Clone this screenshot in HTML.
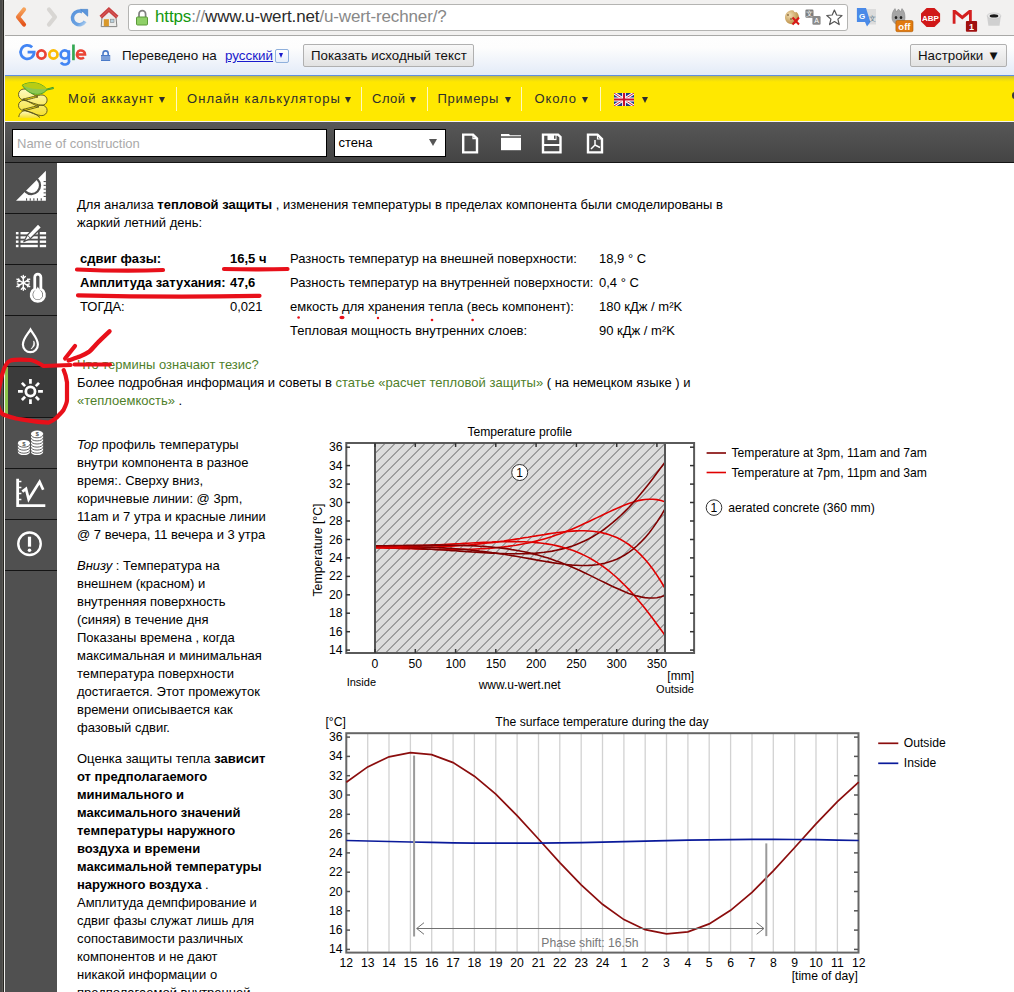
<!DOCTYPE html>
<html><head><meta charset="utf-8">
<style>
*{margin:0;padding:0;box-sizing:border-box}
html,body{width:1014px;height:992px;overflow:hidden;background:#fff}
body{position:relative;font-family:"Liberation Sans",sans-serif;font-size:13px;color:#000}
.a{position:absolute;white-space:nowrap}
#frame{position:absolute;left:0;top:0;width:5px;height:992px;background:linear-gradient(90deg,#4a4a48 0,#4a4a48 2px,#5c5a56 2px,#5c5a56 3px,#262622 3px,#262622 4px,#efeeec 4px,#efeeec 5px)}
#tb{position:absolute;left:5px;top:0;width:1009px;height:36px;background:#f2f1f0;border-bottom:1px solid #a9a9a7;border-top-left-radius:3px}
#url{position:absolute;left:128px;top:4px;width:720px;height:27px;background:#fff;border:1px solid #b4b4b2;border-radius:3px}
#trb{position:absolute;left:5px;top:36px;width:1009px;height:40px;background:linear-gradient(#fefefe 0,#fdfdfd 30%,#e3ebf8 100%);border-bottom:1px solid #5f8fe0}
.gbtn{position:absolute;height:23px;border:1px solid #b0b0b0;border-radius:2px;background:linear-gradient(#f8f8f8,#e2e2e2);font-size:13.3px;line-height:21px;color:#111;padding-left:7px}
#yel{position:absolute;left:5px;top:76px;width:1009px;height:45px;background:linear-gradient(#c8bb3a 0,#d8ca30 1.5px,#eedc10 3.5px,#ffe800 6px,#ffe800 100%)}
.mi{position:absolute;top:91px;font-size:13px;line-height:15px;color:#2e2e2e}
.sep{position:absolute;top:87px;width:1px;height:24px;background:#fff8c0}
.tri{position:absolute;top:96.7px;width:0;height:0;border-left:3.3px solid transparent;border-right:3.3px solid transparent;border-top:6px solid #2e2e2e}
#wl{position:absolute;left:5px;top:121px;width:1009px;height:1px;background:#f4f4f0}
#dtb{position:absolute;left:5px;top:122px;width:1009px;height:41px;background:linear-gradient(#575757,#444);border-bottom:1px solid #151515}
#inp{position:absolute;left:12px;top:129px;width:315px;height:28px;background:#fff;border:1.5px solid #000}
#sel{position:absolute;left:334px;top:129px;width:112px;height:28px;background:#fff;border:1.5px solid #000}
#side{position:absolute;left:5px;top:163px;width:52px;height:829px;background:#505050}
.cell{position:absolute;left:5px;width:52px;height:51px;border-bottom:1px solid #141414}
#cont{position:absolute;left:0;top:0}
.p{position:absolute;left:77px;font-size:13px;line-height:18px;color:#000;white-space:nowrap}
.lk{color:#4f7f2a}
.tr{position:absolute;font-size:13px;white-space:nowrap}
svg text{font-family:"Liberation Sans",sans-serif}
</style></head><body>
<div id="frame"></div>
<!-- browser toolbar -->
<div id="tb"></div>
<svg class="a" style="left:0;top:0" width="128" height="36">
  <defs>
    <linearGradient id="gback" x1="0" y1="0" x2="0" y2="1"><stop offset="0" stop-color="#f6a25a"/><stop offset="1" stop-color="#e4551c"/></linearGradient>
    <linearGradient id="grel" x1="0" y1="0" x2="1" y2="1"><stop offset="0" stop-color="#5a94dc"/><stop offset="0.7" stop-color="#6aa2e2"/><stop offset="1" stop-color="#b0d0f0"/></linearGradient>
  </defs>
  <path d="M24,9.5 L18,17 L24,24.5" fill="none" stroke="url(#gback)" stroke-width="4.2" stroke-linecap="round" stroke-linejoin="round"/>
  <path d="M49,9.5 L55,17 L49,24.5" fill="none" stroke="#d8d6d3" stroke-width="4.2" stroke-linecap="round" stroke-linejoin="round"/>
  <path d="M82.5,11.9 A6.8,6.8 0 1 0 85.1,21.4" fill="none" stroke="url(#grel)" stroke-width="3.5"/>
  <path d="M80.5,9.4 L87.7,9.4 L87.7,16.2 Z" fill="#5a95dc" stroke="#4a85cc" stroke-width="0.8" stroke-linejoin="round"/>
  <path d="M102,17 L109,11 L116,17 L116.9,26.6 L101.2,26.6Z" fill="#ececea" stroke="#858583" stroke-width="1"/>
  <path d="M100.8,17.2 L108.9,9.6 L117.2,17.2" fill="none" stroke="#c94040" stroke-width="3.8" stroke-linejoin="miter"/>
  <path d="M100.8,17.2 L108.9,9.6 L117.2,17.2" fill="none" stroke="#e07070" stroke-width="1" stroke-linejoin="miter" opacity="0.6"/>
  <rect x="103.8" y="19.2" width="5.1" height="7" fill="#d9982a"/>
  <rect x="110.3" y="19.2" width="3.7" height="3.4" fill="#b8d0dc" stroke="#888" stroke-width="0.6"/>
</svg>
<div id="url"></div>
<svg class="a" style="left:134px;top:8px" width="16" height="20">
  <path d="M5,9 V6 A3.3,3.3 0 0 1 11.6,6 V9" fill="none" stroke="#808080" stroke-width="1.7"/>
  <rect x="2.5" y="9" width="11" height="8" rx="1" fill="#8fd068" stroke="#5b9a3a" stroke-width="1"/>
</svg>
<div class="a" style="left:155px;top:6px;font-size:17px;letter-spacing:-0.13px;line-height:22px;color:#888"><span style="color:#14980f">https</span>://<span style="color:#2b2b2b">www.u-wert.net</span>/u-wert-rechner/?</div>
<!-- url right icons -->
<svg class="a" style="left:780px;top:0px" width="234" height="34">
  <defs><radialGradient id="gck" cx="0.35" cy="0.35" r="0.7"><stop offset="0" stop-color="#f0dcb0"/><stop offset="1" stop-color="#b98a3e"/></radialGradient></defs>
  <path d="M16.5,12 A7,7 0 1 1 13.5,10.5 A2.2,2.2 0 0 0 16.5,12Z" fill="url(#gck)"/>
  <circle cx="8" cy="15" r="0.9" fill="#8a6a40"/><circle cx="11" cy="19" r="0.9" fill="#8a6a40"/>
  <path d="M12.5,17.5 L19,24.5 M19,17.5 L12.5,24.5" stroke="#d81818" stroke-width="2"/>
  <rect x="25.4" y="9.6" width="8.1" height="8.1" rx="1.2" fill="#7d7d7d"/>
  <rect x="32.4" y="16.1" width="8.2" height="8.7" rx="1.2" fill="#8a8a8a"/>
  <text x="29.4" y="16" font-size="6.5" fill="#fff" text-anchor="middle">文</text>
  <text x="36.5" y="23.3" font-size="7" fill="#fff" text-anchor="middle">A</text>
  <path d="M54.4,10 L56.6,15 L62,15.5 L57.9,19.1 L59.2,24.6 L54.4,21.6 L49.6,24.6 L50.9,19.1 L46.8,15.5 L52.2,15Z" fill="#fff" stroke="#555" stroke-width="1.2" stroke-linejoin="round"/>
  <rect x="86" y="9" width="10" height="15.5" fill="#dcdcdc"/>
  <path d="M76.9,7.9 L86,7.9 L90.4,22 L87,26.4 L85,22 L76.9,22Z" fill="#4a8ae8"/>
  <text x="82" y="18.5" font-size="8" fill="#fff" text-anchor="middle" font-weight="bold">G</text>
  <text x="92" y="21" font-size="7" fill="#5a7a8a" text-anchor="middle">文</text>
  <path d="M112,18 C112,13 113,11 115,8.6 L116.5,12 L118.5,9 L120.5,12 L122,8.6 C124,11 125,13 125,18 A6.5,6.5 0 0 1 112,18Z" fill="#a5a5a5" stroke="#888" stroke-width="0.6"/>
  <ellipse cx="116" cy="17.5" rx="1.3" ry="1.6" fill="#222"/><ellipse cx="121" cy="17.5" rx="1.3" ry="1.6" fill="#222"/>
  <rect x="115.9" y="20.5" width="17.1" height="11.2" rx="1.5" fill="#e07a10" stroke="#b05a00" stroke-width="0.6"/>
  <text x="124.4" y="29.6" font-size="9.5" fill="#fff" text-anchor="middle" font-weight="bold">off</text>
  <path d="M146.6,7.9 L154.5,7.9 L160.1,13.5 L160.1,21.4 L154.5,27 L146.6,27 L141,21.4 L141,13.5Z" fill="#d01818"/>
  <text x="150.5" y="21" font-size="8" fill="#fff" text-anchor="middle" font-weight="bold">ABP</text>
  <rect x="172.7" y="9.9" width="19.1" height="13.9" fill="#f4f4f4"/>
  <path d="M172.7,9.9 V23.8 H175.5 V14 L182.25,19.5 L189,14 V23.8 H191.8 V9.9 H189 L182.25,15.5 L175.5,9.9Z" fill="#d42020"/>
  <rect x="185.9" y="21" width="11.2" height="10.7" rx="1" fill="#a01010"/>
  <text x="191.5" y="30" font-size="9" fill="#fff" text-anchor="middle" font-weight="bold">1</text>
  <path d="M207,15.9 L220.9,15.9 L219.5,25.8 L208.4,25.8Z" fill="#d0d0d0"/>
  <ellipse cx="214" cy="15.9" rx="6.9" ry="3" fill="#e8e8e8" stroke="#bbb" stroke-width="0.5"/>
  <ellipse cx="214" cy="15.9" rx="4.3" ry="1.6" fill="#1a1a1a"/>
</svg>

<!-- translate bar -->
<div id="trb"></div>
<svg class="a" style="left:0;top:36px" width="100" height="36" fill="none" stroke-width="2.7">
  <path d="M32.2,11.3 A6.8,6.8 0 1 0 34.2,16.1 H27.6" stroke="#4285f4"/>
  <circle cx="41.45" cy="18.5" r="4.1" stroke="#ea4335"/>
  <circle cx="53.4" cy="18.5" r="4.1" stroke="#fbbc05"/>
  <circle cx="64.75" cy="18.5" r="4.1" stroke="#4285f4"/>
  <path d="M68.85,14.2 V24 A4.1,3.2 0 0 1 61,26.3" stroke="#4285f4"/>
  <path d="M73.45,8.5 V24.2" stroke="#34a853"/>
  <path d="M76.9,18.5 H85.1 A4.1,4.1 0 1 0 83.9,21.4" stroke="#ea4335" stroke-width="2.5"/>
</svg>
<svg class="a" style="left:100px;top:47px" width="12" height="15">
  <path d="M3,8 V6.5 A2.6,2.6 0 0 1 8.2,6.5 V8" fill="none" stroke="#4a7ac8" stroke-width="1.6"/>
  <rect x="1" y="8" width="9.2" height="6" fill="#4a7ac8"/>
  <path d="M1,10 H10.2 M1,12 H10.2" stroke="#c8d8f0" stroke-width="0.8"/>
</svg>
<div class="tr" style="left:122px;top:48px;font-size:13.4px;color:#111">Переведено на</div>
<div class="tr" style="left:225px;top:48px;font-size:13.4px;color:#1a1acc;text-decoration:underline">русский</div>
<div class="a" style="left:275px;top:49px;width:13.5px;height:13.5px;border:1px solid #8fb0dc;border-radius:2px;background:linear-gradient(#fff,#e6eefa)"></div>
<div class="a" style="left:279.3px;top:52.8px;width:0;height:0;border-left:2.9px solid transparent;border-right:2.9px solid transparent;border-top:5.5px solid #1a1acc"></div>
<div class="gbtn" style="left:303px;top:44px;width:171px">Показать исходный текст</div>
<div class="gbtn" style="left:910px;top:44px;width:97px">Настройки ▼</div>

<!-- yellow header -->
<div id="yel"></div>
<svg class="a" style="left:0;top:0" width="60" height="122">
  <defs><linearGradient id="gy" x1="0" y1="0" x2="0" y2="1"><stop offset="0" stop-color="#fffbc0"/><stop offset="1" stop-color="#f5e030"/></linearGradient></defs>
  <path d="M18.8,118 C19,113.5 22,111 25,111 C31,111.5 36,114 40,118Z" fill="url(#gy)"/>
  <path d="M22.8,109.4 C29.8,107.9 37.9,105.2 41.9,105.2 A5.2,5.2 0 0 1 41.9,115.6 C37.9,115.6 29.8,112.4 22.8,109.4Z M39.0,106.9 C32.0,103.9 27.5,100.4 23.5,100.4 A5.0,5.0 0 0 0 23.5,110.4 C27.5,110.4 32.0,108.4 39.0,106.9Z M22.8,99.1 C29.8,97.6 38.0,95.0 42.0,95.0 A5.1,5.1 0 0 1 42.0,105.2 C38.0,105.2 29.8,102.1 22.8,99.1Z M38.0,97.0 C31.0,94.0 28.0,89.0 24.0,89.0 A5.5,5.5 0 0 0 24.0,100.0 C28.0,100.0 31.0,98.5 38.0,97.0Z" fill="url(#gy)"/>
  <g fill="none" stroke="#4e4a1c" stroke-width="0.85">
    <path d="M18.8,117 C19,113.5 22,110.8 25,110.8 C31,111.5 36,114 40,117.5"/>
    <path d="M22.8,109.4 C29.8,107.9 37.9,105.2 41.9,105.2 A5.2,5.2 0 0 1 41.9,115.6 C37.9,115.6 29.8,112.4 22.8,109.4Z M39.0,106.9 C32.0,103.9 27.5,100.4 23.5,100.4 A5.0,5.0 0 0 0 23.5,110.4 C27.5,110.4 32.0,108.4 39.0,106.9Z M22.8,99.1 C29.8,97.6 38.0,95.0 42.0,95.0 A5.1,5.1 0 0 1 42.0,105.2 C38.0,105.2 29.8,102.1 22.8,99.1Z M38.0,97.0 C31.0,94.0 28.0,89.0 24.0,89.0 A5.5,5.5 0 0 0 24.0,100.0 C28.0,100.0 31.0,98.5 38.0,97.0Z"/>
  </g>
  <path d="M22.2,85.2 C28,81.5 40,81 46.7,89.1 L53.2,87.3 L53.5,88.6 L46.7,90 C42,96 30,97 22.2,85.2Z" fill="#8ec850" stroke="#3a9a2a" stroke-width="0.9"/>
  <path d="M22.2,85.2 C28,81.5 40,81 46.7,89.1 C38,89.5 30,89 22.2,85.2Z" fill="#b8cc14"/>
</svg>
<div class="mi" style="left:68px;letter-spacing:1.05px">Мой аккаунт</div><div class="tri" style="left:159.4px"></div>
<div class="sep" style="left:176px"></div>
<div class="mi" style="left:187px;letter-spacing:1.05px">Онлайн калькуляторы</div><div class="tri" style="left:345px"></div>
<div class="sep" style="left:361px"></div>
<div class="mi" style="left:372px;letter-spacing:0.5px">Слой</div><div class="tri" style="left:410.4px"></div>
<div class="sep" style="left:427px"></div>
<div class="mi" style="left:437.5px;letter-spacing:0.72px">Примеры</div><div class="tri" style="left:504.6px"></div>
<div class="sep" style="left:521px"></div>
<div class="mi" style="left:534.5px;letter-spacing:0.9px">Около</div><div class="tri" style="left:581.6px"></div>
<div class="sep" style="left:600px"></div>
<svg class="a" style="left:614px;top:93px" width="20" height="13" viewBox="0 0 21 13" preserveAspectRatio="none">
  <rect width="21" height="13" fill="#1f3a8a"/>
  <path d="M0,0 L21,13 M21,0 L0,13" stroke="#fff" stroke-width="3"/>
  <path d="M0,0 L21,13 M21,0 L0,13" stroke="#c8102e" stroke-width="1"/>
  <path d="M10.5,0 V13 M0,6.5 H21" stroke="#fff" stroke-width="4"/>
  <path d="M10.5,0 V13 M0,6.5 H21" stroke="#c8102e" stroke-width="2.2"/>
</svg>
<div class="tri" style="left:641.5px"></div>
<div class="a" style="left:1012px;top:92px;width:6px;height:7px;border-radius:3px;background:#3a3a3a"></div>

<div id="wl"></div>
<!-- dark toolbar -->
<div id="dtb"></div>
<div id="inp"></div>
<div class="tr" style="left:17px;top:136px;color:#a9a9a9">Name of construction</div>
<div id="sel"></div>
<div class="tr" style="left:338.5px;top:135px;color:#000">стена</div>
<div class="a" style="left:428.7px;top:139.3px;width:0;height:0;border-left:4.1px solid transparent;border-right:4.1px solid transparent;border-top:7.3px solid #555"></div>
<svg class="a" style="left:455px;top:125px" width="160" height="35" fill="none" stroke="#fff" stroke-width="2.4">
  <path d="M8.2,9.6 H18 L22,13.6 V27.4 H8.2Z"/>
  <path d="M18,9.6 V13.6 H22" stroke-width="1.2"/>
  <path d="M46,9 H54 L55,10.2 H66 V11.2 H46Z" fill="#fff" stroke="none"/>
  <rect x="46" y="12.8" width="20" height="12.4" fill="#fff" stroke="none"/>
  <path d="M88,9.6 H103 L105.5,12 V27.4 H88Z"/>
  <rect x="92.5" y="9.6" width="9" height="5.5" fill="#fff" stroke="none"/>
  <rect x="99" y="10.6" width="1.6" height="3.2" fill="#555" stroke="none"/>
  <rect x="88.2" y="19" width="17" height="2" fill="#fff" stroke="none"/>
  <path d="M133,9.6 H142.5 L147,14 V27.4 H133Z"/>
  <path d="M142.5,9.6 V14 H147" stroke-width="1.2"/>
  <path d="M140,15 V20 L136,24 M140,20 L145,22.5" stroke-width="1.5"/>
</svg>

<!-- sidebar -->
<div id="side"></div>
<div class="cell" style="top:163px"></div>
<div class="cell" style="top:214px"></div>
<div class="cell" style="top:265px"></div>
<div class="cell" style="top:316px"></div>
<div class="cell" style="top:367px;background:#3b3b3b;border-left:3px solid #8bc34a;"></div>
<div class="cell" style="top:418px"></div>
<div class="cell" style="top:469px"></div>
<div class="cell" style="top:520px"></div>
<svg class="a" style="left:0;top:0" width="60" height="600">
  <!-- ruler triangle -->
  <path d="M16,200.7 L45.9,170.8 L45.9,200.7Z" fill="#fff"/>
  <path d="M24.9,192.2 L25.47,191.63 A8.6,8.6 0 0 0 37.63,179.47 L38.2,178.9" fill="none" stroke="#505050" stroke-width="2.2"/>
  <g fill="#505050"><rect x="43.6" y="181" width="2.3" height="1.1"/><rect x="43.6" y="184.8" width="2.3" height="1.1"/><rect x="43.6" y="188.6" width="2.3" height="1.1"/><rect x="43.6" y="192.3" width="2.3" height="1.1"/><rect x="43.6" y="195.9" width="2.3" height="1.1"/>
  <rect x="26" y="198.3" width="1.1" height="2.4"/><rect x="29.7" y="198.3" width="1.1" height="2.4"/><rect x="33.3" y="198.3" width="1.1" height="2.4"/><rect x="36.9" y="198.3" width="1.1" height="2.4"/><rect x="40.7" y="198.3" width="1.1" height="2.4"/></g>
  <!-- edit table -->
  <g fill="#fff">
    <rect x="15.9" y="232" width="2.6" height="2.4"/><rect x="20.5" y="232" width="17.3" height="2.4"/><rect x="39.8" y="232" width="6.3" height="2.4"/>
    <rect x="15.9" y="236.3" width="2.6" height="2.4"/><rect x="20.5" y="236.3" width="17.3" height="2.4"/><rect x="39.8" y="236.3" width="6.3" height="2.4"/>
    <rect x="15.9" y="240.5" width="2.6" height="2.4"/><rect x="20.5" y="240.5" width="17.3" height="2.4"/><rect x="39.8" y="240.5" width="6.3" height="2.4"/>
    <rect x="15.9" y="244.8" width="2.6" height="2.4"/><rect x="20.5" y="244.8" width="17.3" height="2.4"/><rect x="39.8" y="244.8" width="6.3" height="2.4"/>
  </g>
  <path d="M38,223.9 L41.6,227.5 L30.5,238.5 L23.8,241.7 L27.4,235Z" fill="#fff" stroke="#505050" stroke-width="1.3" stroke-linejoin="round"/>
  <path d="M27.4,235 L30.5,238.5" stroke="#505050" stroke-width="0.9"/>
  <!-- snowflake -->
  <g stroke="#fff" stroke-width="1.4" fill="none" stroke-linecap="round">
    <path d="M23.3,275.5 V290.3 M16.9,279.2 L29.7,286.6 M29.7,279.2 L16.9,286.6"/>
    <path d="M21.3,276.5 L23.3,278.5 L25.3,276.5 M21.3,289.3 L23.3,287.3 L25.3,289.3"/>
    <path d="M17.3,281.9 L19.3,281.2 L18.7,279 M29.3,283.9 L27.3,284.6 L27.9,286.8"/>
    <path d="M29.3,281.9 L27.3,281.2 L27.9,279 M17.3,283.9 L19.3,284.6 L18.7,286.8"/>
  </g>
  <!-- thermometer -->
  <path d="M34.75,288.88 V277.25 A3.05,3.05 0 0 1 40.85,277.25 V288.88 A6.66,6.66 0 1 1 34.75,288.88 Z" fill="none" stroke="#fff" stroke-width="2.8"/>
  <path d="M37.8,286.5 C38.5,289 42.4,291 42.4,295 A4.6,4.6 0 0 1 33.2,295 C33.2,291 37.1,289 37.8,286.5Z" fill="#fff"/>
  <!-- drop -->
  <path d="M30.5,329.6 C28,334 22.9,338.5 22.9,344.6 A7.5,7.5 0 0 0 37.9,344.6 C37.9,338.5 33,334 30.5,329.6Z" fill="none" stroke="#fff" stroke-width="2.2" stroke-linejoin="miter"/>
  <path d="M33.6,340.9 C35.3,343 35.3,346.5 31,348.9 C33.5,346.5 34,343.5 33.6,340.9Z" fill="#fff" stroke="#fff" stroke-width="0.6"/>
  <!-- sun -->
  <circle cx="30.44" cy="391.47" r="4.6" fill="none" stroke="#fff" stroke-width="2.75"/>
  <g stroke="#fff" stroke-width="2.74">
    <path d="M30.44,379 V383.8 M30.44,399.2 V404 M18,391.47 H22.8 M38.1,391.47 H42.9"/>
    <path d="M21.9,382.9 L25.1,386.1 M35.8,396.8 L39,400 M39,382.9 L35.8,386.1 M25.1,396.8 L21.9,400"/>
  </g>
  <!-- coins -->
  <g fill="#fff">
    <ellipse cx="23.9" cy="443" rx="6" ry="3.1"/><rect x="17.9" y="443" width="12" height="9.1"/><ellipse cx="23.9" cy="452.1" rx="6" ry="3"/>
    <ellipse cx="37.05" cy="433.6" rx="6.05" ry="3.1"/><rect x="31" y="433.6" width="12.1" height="18.5"/><ellipse cx="37.05" cy="452.1" rx="6.05" ry="3"/>
  </g>
  <g fill="none" stroke="#505050" stroke-width="0.9">
    <path d="M17.9,444.2 A6,3 0 0 0 29.9,444.2 M17.9,447.2 A6,3 0 0 0 29.9,447.2 M17.9,450.2 A6,3 0 0 0 29.9,450.2"/>
    <path d="M31,434.8 A6.05,3 0 0 0 43.1,434.8 M31,437.9 A6.05,3 0 0 0 43.1,437.9 M31,441 A6.05,3 0 0 0 43.1,441 M31,444.1 A6.05,3 0 0 0 43.1,444.1 M31,447.1 A6.05,3 0 0 0 43.1,447.1 M31,450.2 A6.05,3 0 0 0 43.1,450.2"/>
  </g>
  <text x="23.9" y="445.6" font-size="6" fill="#505050" text-anchor="middle" font-weight="bold">$</text>
  <text x="37.05" y="436.2" font-size="6" fill="#505050" text-anchor="middle" font-weight="bold">$</text>
  <!-- chart -->
  <path d="M17.65,478.8 V505.6 H45.3" fill="none" stroke="#fff" stroke-width="2.8"/>
  <path d="M19,481.5 H21.4 M19,487.4 H21.4 M19,493.5 H21.4 M19,499.5 H21.4" stroke="#fff" stroke-width="1.5"/>
  <path d="M22.3,491.6 L26,488.8 L28.7,499.3 L39.6,481.9 L43.2,489.7" fill="none" stroke="#fff" stroke-width="2.7"/>
  <!-- alert -->
  <circle cx="29.5" cy="543.8" r="11.25" fill="none" stroke="#fff" stroke-width="2.4"/>
  <rect x="27.9" y="536.7" width="3.2" height="10" fill="#fff"/>
  <circle cx="29.5" cy="550.3" r="1.8" fill="#fff"/>
</svg>

<!-- content -->
<div class="p" style="top:196px">Для анализа <b>тепловой защиты</b> , изменения температуры в пределах компонента были смоделированы в<br>жаркий летний день:</div>

<div class="tr" style="left:80px;top:251px;font-weight:bold">сдвиг фазы:</div>
<div class="tr" style="left:230px;top:251px;font-weight:bold">16,5 ч</div>
<div class="tr" style="left:290px;top:251px">Разность температур на внешней поверхности:</div>
<div class="tr" style="left:599px;top:251px">18,9 ° C</div>
<div class="tr" style="left:80px;top:275px;font-weight:bold">Амплитуда затухания:</div>
<div class="tr" style="left:230px;top:275px;font-weight:bold">47,6</div>
<div class="tr" style="left:290px;top:275px">Разность температур на внутренней поверхности:</div>
<div class="tr" style="left:599px;top:275px">0,4 ° C</div>
<div class="tr" style="left:80px;top:299px">ТОГДА:</div>
<div class="tr" style="left:230px;top:299px">0,021</div>
<div class="tr" style="left:290px;top:299px">емкость для хранения тепла (весь компонент):</div>
<div class="tr" style="left:599px;top:299px">180 кДж / m²K</div>
<div class="tr" style="left:290px;top:323px">Тепловая мощность внутренних слоев:</div>
<div class="tr" style="left:599px;top:323px">90 кДж / m²K</div>

<div class="p" style="top:356px"><span class="lk">Что термины означают тезис?</span><br>Более подробная информация и советы в <span class="lk">статье «расчет тепловой защиты»</span> ( на немецком языке ) и<br><span class="lk">«теплоемкость»</span> .</div>

<div class="p" style="top:436px"><i>Top</i> профиль температуры<br>внутри компонента в разное<br>время:. Сверху вниз,<br>коричневые линии: @ 3pm,<br>11am и 7 утра и красные линии<br>@ 7 вечера, 11 вечера и 3 утра</div>
<div class="p" style="top:557px"><i>Внизу</i> : Температура на<br>внешнем (красном) и<br>внутренняя поверхность<br>(синяя) в течение дня<br>Показаны времена , когда<br>максимальная и минимальная<br>температура поверхности<br>достигается. Этот промежуток<br>времени описывается как<br>фазовый сдвиг.</div>
<div class="p" style="top:750px">Оценка защиты тепла <b>зависит<br>от предполагаемого<br>минимального и<br>максимального значений<br>температуры наружного<br>воздуха и времени<br>максимальной температуры<br>наружного воздуха</b> .<br>Амплитуда демпфирование и<br>сдвиг фазы служат лишь для<br>сопоставимости различных<br>компонентов и не дают<br>никакой информации о<br>предполагаемой внутренней</div>

<!-- charts -->
<svg class="a" style="left:0;top:0" width="1014" height="992" font-size="12.15">
  <text x="519.7" y="435.8" text-anchor="middle">Temperature profile</text>
  <rect x="375" y="443" width="290" height="209.5" fill="#dcdcdc"/>
  <clipPath id="c1"><rect x="375" y="443" width="290" height="209.5"/></clipPath>
  <path d="M155.5,653 L365.5,443 M165.5,653 L375.5,443 M175.5,653 L385.5,443 M185.5,653 L395.5,443 M195.5,653 L405.5,443 M205.5,653 L415.5,443 M215.5,653 L425.5,443 M225.5,653 L435.5,443 M235.5,653 L445.5,443 M245.5,653 L455.5,443 M255.5,653 L465.5,443 M265.5,653 L475.5,443 M275.5,653 L485.5,443 M285.5,653 L495.5,443 M295.5,653 L505.5,443 M305.5,653 L515.5,443 M315.5,653 L525.5,443 M325.5,653 L535.5,443 M335.5,653 L545.5,443 M345.5,653 L555.5,443 M355.5,653 L565.5,443 M365.5,653 L575.5,443 M375.5,653 L585.5,443 M385.5,653 L595.5,443 M395.5,653 L605.5,443 M405.5,653 L615.5,443 M415.5,653 L625.5,443 M425.5,653 L635.5,443 M435.5,653 L645.5,443 M445.5,653 L655.5,443 M455.5,653 L665.5,443 M465.5,653 L675.5,443 M475.5,653 L685.5,443 M485.5,653 L695.5,443 M495.5,653 L705.5,443 M505.5,653 L715.5,443 M515.5,653 L725.5,443 M525.5,653 L735.5,443 M535.5,653 L745.5,443 M545.5,653 L755.5,443 M555.5,653 L765.5,443 M565.5,653 L775.5,443 M575.5,653 L785.5,443 M585.5,653 L795.5,443 M595.5,653 L805.5,443 M605.5,653 L815.5,443 M615.5,653 L825.5,443 M625.5,653 L835.5,443 M635.5,653 L845.5,443 M645.5,653 L855.5,443 M655.5,653 L865.5,443 M665.5,653 L875.5,443" stroke="#333" stroke-width="0.75" clip-path="url(#c1)"/>
  <g fill="none" stroke-width="1.6" clip-path="url(#c1)"><path d="M375.0,547.8 L379.0,547.9 L383.1,548.0 L387.1,548.1 L391.1,548.2 L395.1,548.3 L399.2,548.5 L403.2,548.6 L407.2,548.7 L411.2,548.8 L415.3,548.9 L419.3,549.0 L423.3,549.1 L427.4,549.2 L431.4,549.2 L435.4,549.3 L439.4,549.4 L443.5,549.4 L447.5,549.4 L451.5,549.4 L455.6,549.4 L459.6,549.4 L463.6,549.3 L467.6,549.3 L471.7,549.2 L475.7,549.0 L479.7,548.8 L483.8,548.6 L487.8,548.4 L491.8,548.1 L495.8,547.7 L499.9,547.3 L503.9,546.9 L507.9,546.4 L511.9,545.8 L516.0,545.2 L520.0,544.5 L524.0,543.8 L528.1,543.0 L532.1,542.1 L536.1,541.1 L540.1,540.1 L544.2,538.9 L548.2,537.7 L552.2,536.5 L556.2,535.1 L560.3,533.7 L564.3,532.2 L568.3,530.6 L572.4,528.9 L576.4,527.2 L580.4,525.4 L584.4,523.6 L588.5,521.8 L592.5,519.8 L596.5,517.9 L600.6,516.0 L604.6,514.0 L608.6,512.1 L612.6,510.2 L616.7,508.4 L620.7,506.7 L624.7,505.0 L628.8,503.5 L632.8,502.2 L636.8,501.0 L640.8,500.1 L644.9,499.5 L648.9,499.2 L652.9,499.2 L656.9,499.6 L661.0,500.5 L665.0,501.8" stroke="#e00000"/><path d="M375.0,547.1 L379.0,547.2 L383.1,547.3 L387.1,547.4 L391.1,547.5 L395.1,547.7 L399.2,547.8 L403.2,548.0 L407.2,548.1 L411.2,548.3 L415.3,548.5 L419.3,548.7 L423.3,548.9 L427.4,549.1 L431.4,549.3 L435.4,549.6 L439.4,549.8 L443.5,550.0 L447.5,550.3 L451.5,550.6 L455.6,550.8 L459.6,551.1 L463.6,551.4 L467.6,551.6 L471.7,551.9 L475.7,552.1 L479.7,552.4 L483.8,552.6 L487.8,552.9 L491.8,553.1 L495.8,553.3 L499.9,553.5 L503.9,553.6 L507.9,553.7 L511.9,553.8 L516.0,553.8 L520.0,553.8 L524.0,553.7 L528.1,553.6 L532.1,553.4 L536.1,553.1 L540.1,552.7 L544.2,552.3 L548.2,551.7 L552.2,551.1 L556.2,550.3 L560.3,549.4 L564.3,548.4 L568.3,547.2 L572.4,545.9 L576.4,544.4 L580.4,542.8 L584.4,541.0 L588.5,539.0 L592.5,536.8 L596.5,534.4 L600.6,531.8 L604.6,529.0 L608.6,525.9 L612.6,522.7 L616.7,519.2 L620.7,515.5 L624.7,511.6 L628.8,507.5 L632.8,503.1 L636.8,498.5 L640.8,493.8 L644.9,488.8 L648.9,483.7 L652.9,478.5 L656.9,473.1 L661.0,467.6 L665.0,462.1" stroke="#800000"/><path d="M375.0,547.6 L379.0,547.6 L383.1,547.6 L387.1,547.6 L391.1,547.6 L395.1,547.6 L399.2,547.6 L403.2,547.6 L407.2,547.6 L411.2,547.5 L415.3,547.5 L419.3,547.4 L423.3,547.3 L427.4,547.2 L431.4,547.1 L435.4,547.0 L439.4,546.8 L443.5,546.6 L447.5,546.4 L451.5,546.2 L455.6,546.0 L459.6,545.7 L463.6,545.4 L467.6,545.1 L471.7,544.7 L475.7,544.3 L479.7,543.9 L483.8,543.5 L487.8,543.0 L491.8,542.6 L495.8,542.1 L499.9,541.5 L503.9,541.0 L507.9,540.4 L511.9,539.8 L516.0,539.1 L520.0,538.5 L524.0,537.8 L528.1,537.2 L532.1,536.5 L536.1,535.9 L540.1,535.2 L544.2,534.6 L548.2,533.9 L552.2,533.3 L556.2,532.8 L560.3,532.3 L564.3,531.8 L568.3,531.4 L572.4,531.1 L576.4,530.9 L580.4,530.8 L584.4,530.8 L588.5,531.0 L592.5,531.3 L596.5,531.8 L600.6,532.5 L604.6,533.4 L608.6,534.5 L612.6,535.9 L616.7,537.6 L620.7,539.5 L624.7,541.9 L628.8,544.5 L632.8,547.6 L636.8,551.0 L640.8,554.9 L644.9,559.2 L648.9,564.0 L652.9,569.3 L656.9,575.1 L661.0,581.5 L665.0,588.4" stroke="#e00000"/><path d="M375.0,546.1 L379.0,546.1 L383.1,546.1 L387.1,546.2 L391.1,546.2 L395.1,546.3 L399.2,546.3 L403.2,546.4 L407.2,546.5 L411.2,546.6 L415.3,546.7 L419.3,546.8 L423.3,547.0 L427.4,547.1 L431.4,547.3 L435.4,547.5 L439.4,547.7 L443.5,547.9 L447.5,548.2 L451.5,548.4 L455.6,548.7 L459.6,549.1 L463.6,549.4 L467.6,549.8 L471.7,550.2 L475.7,550.6 L479.7,551.1 L483.8,551.5 L487.8,552.0 L491.8,552.6 L495.8,553.1 L499.9,553.7 L503.9,554.3 L507.9,555.0 L511.9,555.6 L516.0,556.3 L520.0,557.0 L524.0,557.7 L528.1,558.4 L532.1,559.1 L536.1,559.9 L540.1,560.6 L544.2,561.3 L548.2,561.9 L552.2,562.6 L556.2,563.2 L560.3,563.8 L564.3,564.3 L568.3,564.7 L572.4,565.1 L576.4,565.3 L580.4,565.5 L584.4,565.5 L588.5,565.4 L592.5,565.1 L596.5,564.7 L600.6,564.1 L604.6,563.2 L608.6,562.1 L612.6,560.8 L616.7,559.2 L620.7,557.2 L624.7,555.0 L628.8,552.4 L632.8,549.4 L636.8,546.0 L640.8,542.2 L644.9,537.9 L648.9,533.2 L652.9,527.9 L656.9,522.1 L661.0,515.8 L665.0,508.9" stroke="#800000"/><path d="M375.0,546.6 L379.0,546.6 L383.1,546.5 L387.1,546.4 L391.1,546.3 L395.1,546.3 L399.2,546.2 L403.2,546.1 L407.2,545.9 L411.2,545.8 L415.3,545.7 L419.3,545.5 L423.3,545.4 L427.4,545.2 L431.4,545.1 L435.4,544.9 L439.4,544.7 L443.5,544.5 L447.5,544.3 L451.5,544.1 L455.6,543.9 L459.6,543.7 L463.6,543.4 L467.6,543.2 L471.7,543.0 L475.7,542.8 L479.7,542.6 L483.8,542.4 L487.8,542.2 L491.8,542.1 L495.8,541.9 L499.9,541.8 L503.9,541.7 L507.9,541.6 L511.9,541.6 L516.0,541.6 L520.0,541.7 L524.0,541.8 L528.1,542.0 L532.1,542.3 L536.1,542.6 L540.1,543.0 L544.2,543.5 L548.2,544.1 L552.2,544.8 L556.2,545.6 L560.3,546.6 L564.3,547.7 L568.3,548.9 L572.4,550.3 L576.4,551.8 L580.4,553.5 L584.4,555.4 L588.5,557.4 L592.5,559.7 L596.5,562.1 L600.6,564.8 L604.6,567.6 L608.6,570.7 L612.6,574.0 L616.7,577.5 L620.7,581.3 L624.7,585.2 L628.8,589.4 L632.8,593.8 L636.8,598.4 L640.8,603.3 L644.9,608.2 L648.9,613.4 L652.9,618.7 L656.9,624.2 L661.0,629.7 L665.0,635.3" stroke="#e00000"/><path d="M375.0,545.9 L379.0,545.8 L383.1,545.7 L387.1,545.7 L391.1,545.6 L395.1,545.6 L399.2,545.5 L403.2,545.5 L407.2,545.4 L411.2,545.3 L415.3,545.3 L419.3,545.2 L423.3,545.2 L427.4,545.2 L431.4,545.1 L435.4,545.1 L439.4,545.1 L443.5,545.1 L447.5,545.2 L451.5,545.2 L455.6,545.3 L459.6,545.3 L463.6,545.4 L467.6,545.6 L471.7,545.7 L475.7,545.9 L479.7,546.2 L483.8,546.4 L487.8,546.7 L491.8,547.1 L495.8,547.5 L499.9,547.9 L503.9,548.4 L507.9,548.9 L511.9,549.6 L516.0,550.2 L520.0,551.0 L524.0,551.8 L528.1,552.6 L532.1,553.6 L536.1,554.6 L540.1,555.7 L544.2,556.9 L548.2,558.1 L552.2,559.4 L556.2,560.9 L560.3,562.3 L564.3,563.9 L568.3,565.5 L572.4,567.2 L576.4,569.0 L580.4,570.8 L584.4,572.7 L588.5,574.6 L592.5,576.6 L596.5,578.6 L600.6,580.6 L604.6,582.5 L608.6,584.5 L612.6,586.5 L616.7,588.3 L620.7,590.1 L624.7,591.8 L628.8,593.4 L632.8,594.8 L636.8,595.9 L640.8,596.9 L644.9,597.6 L648.9,598.0 L652.9,598.0 L656.9,597.7 L661.0,596.8 L665.0,595.5" stroke="#800000"/></g>
  
  <path d="M375,443 V652.5 M665,443 V652.5" stroke="#555" stroke-width="2"/>
  <rect x="346.3" y="443" width="347.8" height="210" fill="none" stroke="#5a5a5a" stroke-width="2"/>
  <g stroke="#333" stroke-width="1.5"><line x1="346" y1="650.1" x2="350" y2="650.1"/><line x1="690" y1="650.1" x2="694" y2="650.1"/><line x1="346" y1="631.7" x2="350" y2="631.7"/><line x1="690" y1="631.7" x2="694" y2="631.7"/><line x1="346" y1="613.2" x2="350" y2="613.2"/><line x1="690" y1="613.2" x2="694" y2="613.2"/><line x1="346" y1="594.8" x2="350" y2="594.8"/><line x1="690" y1="594.8" x2="694" y2="594.8"/><line x1="346" y1="576.4" x2="350" y2="576.4"/><line x1="690" y1="576.4" x2="694" y2="576.4"/><line x1="346" y1="557.9" x2="350" y2="557.9"/><line x1="690" y1="557.9" x2="694" y2="557.9"/><line x1="346" y1="539.5" x2="350" y2="539.5"/><line x1="690" y1="539.5" x2="694" y2="539.5"/><line x1="346" y1="521.0" x2="350" y2="521.0"/><line x1="690" y1="521.0" x2="694" y2="521.0"/><line x1="346" y1="502.5" x2="350" y2="502.5"/><line x1="690" y1="502.5" x2="694" y2="502.5"/><line x1="346" y1="484.1" x2="350" y2="484.1"/><line x1="690" y1="484.1" x2="694" y2="484.1"/><line x1="346" y1="465.6" x2="350" y2="465.6"/><line x1="690" y1="465.6" x2="694" y2="465.6"/><line x1="346" y1="447.2" x2="350" y2="447.2"/><line x1="690" y1="447.2" x2="694" y2="447.2"/><line x1="375.0" y1="443" x2="375.0" y2="447"/><line x1="375.0" y1="649" x2="375.0" y2="653"/><line x1="415.3" y1="443" x2="415.3" y2="447"/><line x1="415.3" y1="649" x2="415.3" y2="653"/><line x1="455.6" y1="443" x2="455.6" y2="447"/><line x1="455.6" y1="649" x2="455.6" y2="653"/><line x1="495.8" y1="443" x2="495.8" y2="447"/><line x1="495.8" y1="649" x2="495.8" y2="653"/><line x1="536.1" y1="443" x2="536.1" y2="447"/><line x1="536.1" y1="649" x2="536.1" y2="653"/><line x1="576.4" y1="443" x2="576.4" y2="447"/><line x1="576.4" y1="649" x2="576.4" y2="653"/><line x1="616.7" y1="443" x2="616.7" y2="447"/><line x1="616.7" y1="649" x2="616.7" y2="653"/><line x1="656.9" y1="443" x2="656.9" y2="447"/><line x1="656.9" y1="649" x2="656.9" y2="653"/></g>
  <g font-size="12.2" fill="#000"><text x="342.5" y="654.1" text-anchor="end">14</text><text x="342.5" y="635.7" text-anchor="end">16</text><text x="342.5" y="617.2" text-anchor="end">18</text><text x="342.5" y="598.8" text-anchor="end">20</text><text x="342.5" y="580.4" text-anchor="end">22</text><text x="342.5" y="561.9" text-anchor="end">24</text><text x="342.5" y="543.5" text-anchor="end">26</text><text x="342.5" y="525.0" text-anchor="end">28</text><text x="342.5" y="506.5" text-anchor="end">30</text><text x="342.5" y="488.1" text-anchor="end">32</text><text x="342.5" y="469.6" text-anchor="end">34</text><text x="342.5" y="451.2" text-anchor="end">36</text><text x="375.0" y="667.5" text-anchor="middle">0</text><text x="415.3" y="667.5" text-anchor="middle">50</text><text x="455.6" y="667.5" text-anchor="middle">100</text><text x="495.8" y="667.5" text-anchor="middle">150</text><text x="536.1" y="667.5" text-anchor="middle">200</text><text x="576.4" y="667.5" text-anchor="middle">250</text><text x="616.7" y="667.5" text-anchor="middle">300</text><text x="656.9" y="667.5" text-anchor="middle">350</text></g>
  <circle cx="519.7" cy="472.5" r="8" fill="#fff" stroke="#333" stroke-width="1"/>
  <text x="519.7" y="477" text-anchor="middle" font-size="12">1</text>
  <text x="321.5" y="550" text-anchor="middle" font-size="12.3" transform="rotate(-90 321.5 550)">Temperature [°C]</text>
  <text x="346.7" y="685.6" font-size="11">Inside</text>
  <text x="519.7" y="689.4" text-anchor="middle" font-size="12">www.u-wert.net</text>
  <text x="694" y="679.6" text-anchor="end" font-size="12">[mm]</text>
  <text x="694" y="692.5" text-anchor="end" font-size="11">Outside</text>
  <line x1="706.6" y1="453" x2="726" y2="453" stroke="#800000" stroke-width="1.6"/>
  <line x1="706.6" y1="472.5" x2="726" y2="472.5" stroke="#e00000" stroke-width="1.6"/>
  <text x="731.5" y="457.2">Temperature at 3pm, 11am and 7am</text>
  <text x="731.5" y="477">Temperature at 7pm, 11pm and 3am</text>
  <circle cx="714" cy="507.6" r="7.8" fill="#fff" stroke="#333" stroke-width="1"/>
  <text x="714" y="512" text-anchor="middle">1</text>
  <text x="728.3" y="512">aerated concrete (360 mm)</text>

  <!-- chart 2 -->
  <text x="602" y="725.8" text-anchor="middle">The surface temperature during the day</text>
  <text x="325.5" y="726">[°C]</text>
  <g stroke="#d2d2d2" stroke-width="1.3"><line x1="367.7" y1="734" x2="367.7" y2="952"/><line x1="389.0" y1="734" x2="389.0" y2="952"/><line x1="410.4" y1="734" x2="410.4" y2="952"/><line x1="431.7" y1="734" x2="431.7" y2="952"/><line x1="453.1" y1="734" x2="453.1" y2="952"/><line x1="474.4" y1="734" x2="474.4" y2="952"/><line x1="495.8" y1="734" x2="495.8" y2="952"/><line x1="517.1" y1="734" x2="517.1" y2="952"/><line x1="538.5" y1="734" x2="538.5" y2="952"/><line x1="559.8" y1="734" x2="559.8" y2="952"/><line x1="581.2" y1="734" x2="581.2" y2="952"/><line x1="602.5" y1="734" x2="602.5" y2="952"/><line x1="623.9" y1="734" x2="623.9" y2="952"/><line x1="645.2" y1="734" x2="645.2" y2="952"/><line x1="666.5" y1="734" x2="666.5" y2="952"/><line x1="687.9" y1="734" x2="687.9" y2="952"/><line x1="709.2" y1="734" x2="709.2" y2="952"/><line x1="730.6" y1="734" x2="730.6" y2="952"/><line x1="752.0" y1="734" x2="752.0" y2="952"/><line x1="773.3" y1="734" x2="773.3" y2="952"/><line x1="794.7" y1="734" x2="794.7" y2="952"/><line x1="816.0" y1="734" x2="816.0" y2="952"/><line x1="837.4" y1="734" x2="837.4" y2="952"/></g>
  <rect x="346.3" y="733.2" width="512.2" height="219.4" fill="none" stroke="#666" stroke-width="2"/>
  <g stroke="#555" stroke-width="1.5"><line x1="346" y1="949.4" x2="350" y2="949.4"/><line x1="854" y1="949.4" x2="858" y2="949.4"/><line x1="346" y1="930.1" x2="350" y2="930.1"/><line x1="854" y1="930.1" x2="858" y2="930.1"/><line x1="346" y1="910.8" x2="350" y2="910.8"/><line x1="854" y1="910.8" x2="858" y2="910.8"/><line x1="346" y1="891.5" x2="350" y2="891.5"/><line x1="854" y1="891.5" x2="858" y2="891.5"/><line x1="346" y1="872.2" x2="350" y2="872.2"/><line x1="854" y1="872.2" x2="858" y2="872.2"/><line x1="346" y1="852.9" x2="350" y2="852.9"/><line x1="854" y1="852.9" x2="858" y2="852.9"/><line x1="346" y1="833.6" x2="350" y2="833.6"/><line x1="854" y1="833.6" x2="858" y2="833.6"/><line x1="346" y1="814.3" x2="350" y2="814.3"/><line x1="854" y1="814.3" x2="858" y2="814.3"/><line x1="346" y1="795.0" x2="350" y2="795.0"/><line x1="854" y1="795.0" x2="858" y2="795.0"/><line x1="346" y1="775.7" x2="350" y2="775.7"/><line x1="854" y1="775.7" x2="858" y2="775.7"/><line x1="346" y1="756.4" x2="350" y2="756.4"/><line x1="854" y1="756.4" x2="858" y2="756.4"/><line x1="346" y1="737.1" x2="350" y2="737.1"/><line x1="854" y1="737.1" x2="858" y2="737.1"/></g>
  <g font-size="12.2" fill="#000"><text x="342.5" y="953.4" text-anchor="end">14</text><text x="342.5" y="934.1" text-anchor="end">16</text><text x="342.5" y="914.8" text-anchor="end">18</text><text x="342.5" y="895.5" text-anchor="end">20</text><text x="342.5" y="876.2" text-anchor="end">22</text><text x="342.5" y="856.9" text-anchor="end">24</text><text x="342.5" y="837.6" text-anchor="end">26</text><text x="342.5" y="818.3" text-anchor="end">28</text><text x="342.5" y="799.0" text-anchor="end">30</text><text x="342.5" y="779.7" text-anchor="end">32</text><text x="342.5" y="760.4" text-anchor="end">34</text><text x="342.5" y="741.1" text-anchor="end">36</text><text x="346.3" y="966.5" text-anchor="middle">12</text><text x="367.7" y="966.5" text-anchor="middle">13</text><text x="389.0" y="966.5" text-anchor="middle">14</text><text x="410.4" y="966.5" text-anchor="middle">15</text><text x="431.7" y="966.5" text-anchor="middle">16</text><text x="453.1" y="966.5" text-anchor="middle">17</text><text x="474.4" y="966.5" text-anchor="middle">18</text><text x="495.8" y="966.5" text-anchor="middle">19</text><text x="517.1" y="966.5" text-anchor="middle">20</text><text x="538.5" y="966.5" text-anchor="middle">21</text><text x="559.8" y="966.5" text-anchor="middle">22</text><text x="581.2" y="966.5" text-anchor="middle">23</text><text x="602.5" y="966.5" text-anchor="middle">24</text><text x="623.9" y="966.5" text-anchor="middle">1</text><text x="645.2" y="966.5" text-anchor="middle">2</text><text x="666.5" y="966.5" text-anchor="middle">3</text><text x="687.9" y="966.5" text-anchor="middle">4</text><text x="709.2" y="966.5" text-anchor="middle">5</text><text x="730.6" y="966.5" text-anchor="middle">6</text><text x="752.0" y="966.5" text-anchor="middle">7</text><text x="773.3" y="966.5" text-anchor="middle">8</text><text x="794.7" y="966.5" text-anchor="middle">9</text><text x="816.0" y="966.5" text-anchor="middle">10</text><text x="837.4" y="966.5" text-anchor="middle">11</text><text x="858.7" y="966.5" text-anchor="middle">12</text></g>
  <path d="M346.3,782.2 L367.7,766.9 L389.0,756.8 L410.4,752.6 L431.7,754.6 L453.1,762.6 L474.4,776.2 L495.8,794.2 L517.1,815.7 L538.5,839.0 L559.8,862.6 L581.2,884.9 L602.5,904.3 L623.9,919.6 L645.2,929.7 L666.5,933.9 L687.9,931.9 L709.2,923.9 L730.6,910.3 L752.0,892.3 L773.3,870.8 L794.7,847.5 L816.0,823.9 L837.4,801.6 L858.7,782.2" fill="none" stroke="#8b0d0d" stroke-width="1.7"/>
  <path d="M346.3,840.5 L367.7,841.0 L389.0,841.5 L410.4,842.0 L431.7,842.4 L453.1,842.8 L474.4,843.1 L495.8,843.2 L517.1,843.2 L538.5,843.1 L559.8,842.9 L581.2,842.6 L602.5,842.1 L623.9,841.7 L645.2,841.2 L666.5,840.7 L687.9,840.2 L709.2,839.8 L730.6,839.6 L752.0,839.4 L773.3,839.4 L794.7,839.5 L816.0,839.7 L837.4,840.1 L858.7,840.5" fill="none" stroke="#0a1a9a" stroke-width="1.7"/>
  <g stroke="#9a9a9a" stroke-width="2"><line x1="414.1" y1="755.6" x2="414.1" y2="936.5"/><line x1="766.3" y1="843.4" x2="766.3" y2="936.1"/></g>
  <g stroke="#707070" stroke-width="1" fill="none"><path d="M416.7,928.5 H763.9 M424,922.7 L416.7,928.5 L424,934.3 M756.6,922.7 L763.9,928.5 L756.6,934.3"/></g>
  <text x="541.3" y="946.5" fill="#777">Phase shift: 16.5h</text>
  <text x="857.8" y="980.3" text-anchor="end">[time of day]</text>
  <line x1="878.2" y1="743.3" x2="898.3" y2="743.3" stroke="#8b0d0d" stroke-width="1.7"/>
  <line x1="878.2" y1="763.3" x2="898.3" y2="763.3" stroke="#0a1a9a" stroke-width="1.7"/>
  <text x="903.8" y="746.9">Outside</text>
  <text x="903.8" y="766.8">Inside</text>
</svg>

<!-- red annotations -->
<svg class="a" style="left:0;top:0" width="1014" height="992" fill="none" stroke="#e8101a" stroke-linecap="round" stroke-linejoin="round">
  <path d="M77,269.5 C110,271 140,271 163,270" stroke-width="4.2"/>
  <path d="M224,269 C250,269.5 270,269.5 287.5,269" stroke-width="4.2"/>
  <path d="M78,295.3 C140,296.8 210,296.8 259.5,295.8" stroke-width="4.2"/>
  <g fill="#e8101a" stroke="none"><circle cx="298.6" cy="317.5" r="1.3"/><ellipse cx="342" cy="317.5" rx="2.6" ry="1.7"/><circle cx="378" cy="318" r="1.2"/><circle cx="432" cy="320" r="1.3"/><circle cx="472.6" cy="320" r="1.3"/></g>
  <path d="M109.5,331.3 C105,335.5 101,339.5 98.2,342.2 C95,345.5 92,349.5 89.3,351.6 C85.5,354.2 82,355.5 79.4,356.6 C75,358.2 71.5,359.5 68.6,360.4" stroke-width="4.4"/>
  <path d="M75,346 L65.1,358.5" stroke-width="4.2"/>
  <path d="M74.5,364.5 L110,364.5" stroke-width="4"/>
  <path d="M70.6,365 L43.5,366 C40,364 36,361 30.6,360 C22,359.5 14,359.5 10.5,360.5 C7,361.5 4,367 1.6,376.6 C0,384 -3,395 -2,405 C-1,410 1,413 3.2,414.5 C8,416.5 12,417.5 16,418.5 C25,420 32,421.8 48.4,422.6 C52,421 54.5,419.5 56.5,417.7 C60,414 62,412 63.7,409.7 C66,405 67,402 67,400 L67,382.3 C66,376 65,373 63.7,370.2" stroke-width="4.2"/>
</svg>
</body></html>
